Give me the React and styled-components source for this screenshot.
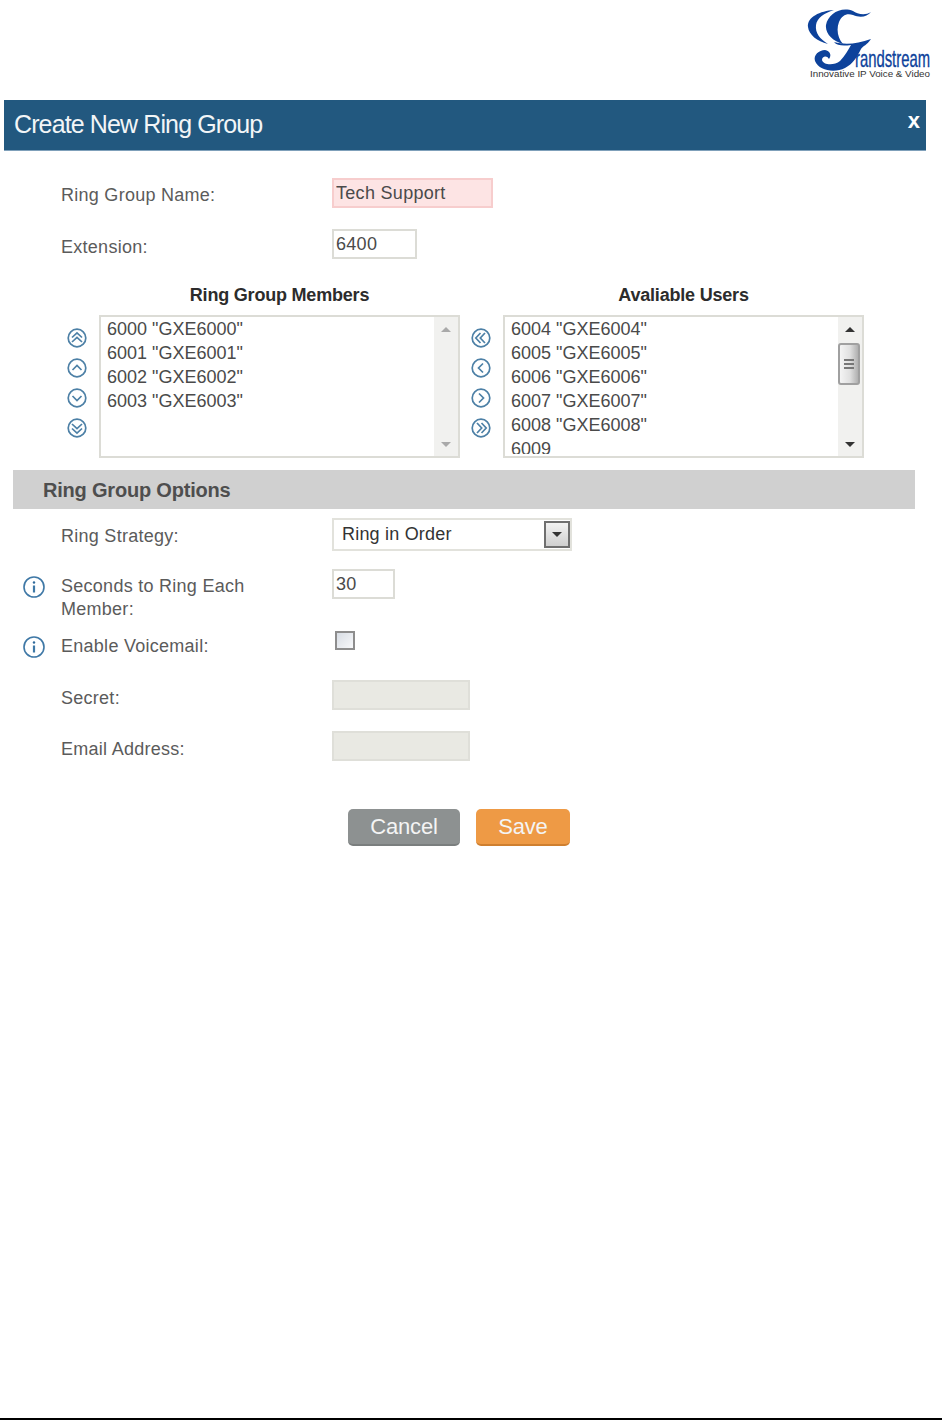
import React from "react"
import styled, { createGlobalStyle } from "styled-components"

const GlobalStyle = createGlobalStyle`
  html, body {
    margin: 0;
    padding: 0;
    background: #fff;
  }
  body {
    font-family: "Liberation Sans", Arial, sans-serif;
  }
`

const Page = styled.div`
  width: 942px;
  height: 1420px;
  box-sizing: border-box;
  border-bottom: 2px solid #000;
  overflow: hidden;
`

const TopBar = styled.header`
  height: 100px;
  display: flex;
  justify-content: flex-end;
  align-items: flex-start;
  padding: 8px 11px 0 0;
  box-sizing: border-box;
`

const Dialog = styled.main`
  width: 922px;
  margin-left: 4px;
`

const TitleBar = styled.div`
  height: 51px;
  background: #22587f;
  border-bottom: 1px solid #7fa0ba;
  box-sizing: border-box;
  display: flex;
  align-items: center;
  justify-content: space-between;
  padding: 0 6px 2px 10px;
  color: #f2f5f7;
`

const Title = styled.h1`
  margin: 0;
  font-size: 25px;
  font-weight: 400;
  letter-spacing: -0.88px;
`

const Close = styled.span`
  font-size: 22px;
  font-weight: 700;
  line-height: 1;
  margin-bottom: 6px;
  color: #fff;
`

const Form = styled.form`
  padding: 27px 0 0 18px;
  margin: 0;
`

const Row = styled.div`
  display: grid;
  grid-template-columns: 39px 271px 1fr;
  align-items: start;
  height: ${p => p.$height || 51}px;
`

const Hint = styled.span`
  display: flex;
  padding-top: ${p => p.$top || 6}px;
`

const Label = styled.label`
  font-size: 18px;
  line-height: 23px;
  letter-spacing: 0.27px;
  padding-top: ${p => p.$top ?? 6}px;
  color: #5b5b5b;
  width: 200px;
`

const TextInput = styled.input`
  display: block;
  width: ${p => p.$width}px;
  height: 30px;
  box-sizing: border-box;
  border: 2px solid ${p => (p.$error ? "#f7cdcd" : p.$disabled ? "#dfdfd9" : "#dcdcd6")};
  background: ${p => (p.$error ? "#fde4e4" : p.$disabled ? "#e9e9e3" : "#fff")};
  padding: 0 0 0 2px;
  margin: 0;
  font-family: "Liberation Sans", Arial, sans-serif;
  font-size: 18px;
  letter-spacing: 0.3px;
  color: #4a4a4a;
  outline: none;
`

const Transfer = styled.div`
  display: grid;
  grid-template-columns: 361px 361px;
  column-gap: 43px;
  margin: 26px 0 12px 77px;
`

const TransferColumn = styled.section`
  display: flex;
  flex-direction: column;
`

const ColumnTitle = styled.h3`
  margin: 0 0 9px;
  font-size: 18px;
  line-height: 21px;
  font-weight: 700;
  letter-spacing: -0.2px;
  text-align: center;
  color: #2c2c2c;
`

const ListRow = styled.div`
  position: relative;
`

const ArrowStack = styled.div`
  position: absolute;
  left: -42px;
  top: 0;
  bottom: 0;
  width: 40px;
  display: flex;
  flex-direction: column;
  align-items: center;
  padding-top: 13px;
  box-sizing: border-box;
  gap: 10px;
`

const ListBox = styled.div`
  height: 143px;
  box-sizing: border-box;
  border: 2px solid #dcdcd6;
  display: grid;
  grid-template-columns: 1fr 24px;
  background: #fff;
`

const Items = styled.ul`
  list-style: none;
  margin: 0;
  padding: 0 0 0 6px;
  height: 137px;
  overflow: hidden;
`

const Item = styled.li`
  font-size: 18px;
  line-height: 24px;
  color: #4a4a4a;
`

const Scrollbar = styled.div`
  background: #f1f1ef;
  display: flex;
  flex-direction: column;
  align-items: center;
  justify-content: space-between;
  padding: 10px 0 9px;
  position: relative;
`

const ScrollArrow = styled.span`
  width: 0;
  height: 0;
  border-left: 5px solid transparent;
  border-right: 5px solid transparent;
  border-${p => (p.$down ? "top" : "bottom")}: 5px solid ${p => (p.$dim ? "#a9a9a9" : "#333")};
`

const Thumb = styled.div`
  position: absolute;
  top: 26px;
  left: 0;
  width: 22px;
  height: 42px;
  box-sizing: border-box;
  border: 2px solid #a0a0a0;
  border-radius: 3px;
  background: linear-gradient(90deg, #f4f4f4, #e0e0e0 55%, #b0b0b0);
  display: flex;
  flex-direction: column;
  align-items: center;
  justify-content: center;
  gap: 2px;
`

const Grip = styled.i`
  width: 10px;
  height: 2px;
  background: #777;
`

const SectionBar = styled.div`
  width: 902px;
  height: 39px;
  margin-left: -9px;
  background: #d0d0d0;
  display: flex;
  align-items: center;
  padding: 1px 0 0 30px;
  box-sizing: border-box;
  font-size: 20px;
  font-weight: 700;
  letter-spacing: -0.2px;
  color: #4e4e4e;
  margin-bottom: 9px;
`

const Select = styled.div`
  width: 240px;
  height: 33px;
  box-sizing: border-box;
  border: 2px solid #e2e2dc;
  display: flex;
  align-items: center;
  justify-content: space-between;
  padding: 0 0 0 8px;
  font-size: 18px;
  letter-spacing: 0.2px;
  color: #333;
`

const SelectButton = styled.span`
  width: 26px;
  height: 27px;
  box-sizing: border-box;
  border: 2px solid #6f6f6f;
  background: linear-gradient(#f2f2f2, #cfcfcf);
  display: flex;
  align-items: center;
  justify-content: center;
`

const CheckBox = styled.span`
  display: block;
  width: 20px;
  height: 19px;
  margin: 0 0 0 3px;
  box-sizing: border-box;
  border: 2px solid #8d8d8d;
  background: linear-gradient(135deg, #d8dde4, #f7f8fa);
`

const Actions = styled.div`
  display: flex;
  gap: 16px;
  margin: -3px 0 0 326px;
`

const Button = styled.button`
  height: 37px;
  width: ${p => p.$width}px;
  padding: 0;
  border: none;
  border-radius: 5px;
  font-family: "Liberation Sans", Arial, sans-serif;
  font-size: 22px;
  letter-spacing: -0.2px;
  color: #f4f4f4;
  background: ${p => (p.$primary ? "#ee9a45" : "#8d9191")};
  border-bottom: 2px solid ${p => (p.$primary ? "#cf7f2f" : "#7a7e7e")};
`

const Logo = () => (
  <svg width="124" height="72" viewBox="0 0 124 72" aria-label="Grandstream">
    <g fill="#0d429b">
      <path d="M27 2C13 3 0 9 1 19C2 27 10 33 21 36C13 31 8 25 9 17C10 10 17 5 27 2Z" />
      <path d="M64 4C58 8 50 6 46 3C34 -2 21 6 19 17C18 26 26 33 36 36C31 30 29 22 32 14C35 7 40 5 46 7C53 10 60 9 64 4Z" />
      <path d="M27 34C38 37 50 36 64 31C60 37 56 38 54 41C50 49 46 56 38 60C28 65 12 63 8 53C6 47 12 42 18 42C23 43 25 47 22 51C20 47 15 48 15 52C16 57 27 58 33 53C38 48 41 42 44 37C37 38 30 38 27 34Z" />
      <text x="48" y="59" fontFamily="Liberation Sans, sans-serif" fontSize="24" stroke="#0d429b" strokeWidth="0.35" textLength="75" lengthAdjust="spacingAndGlyphs">randstream</text>
    </g>
    <text x="3" y="69" fill="#333" fontFamily="Liberation Sans, sans-serif" fontSize="9" textLength="120" lengthAdjust="spacingAndGlyphs">Innovative IP Voice &amp; Video</text>
  </svg>
)

const InfoIcon = () => (
  <svg width="24" height="24" viewBox="0 0 24 24" fill="none" stroke="#3f78a6">
    <circle cx="12" cy="12" r="10" strokeWidth="1.6" />
    <circle cx="12" cy="7.5" r="1.2" fill="#2f6a9b" stroke="none" />
    <path d="M12 10.5V17.5" strokeWidth="2.2" />
  </svg>
)

const ArrowSvg = styled.svg`
  transform: rotate(${p => p.$angle}deg);
  display: block;
`

// double chevrons point up before rotation
const MoveIcon = ({ angle, double }) => (
  <ArrowSvg $angle={angle} width="20" height="20" viewBox="0 0 20 20" fill="none" stroke="#4d80a6" strokeWidth="1.7">
    <circle cx="10" cy="10" r="8.8" />
    {double ? (
      <>
        <path d="M5 9.5L10 4.8L15 9.5" />
        <path d="M5 14L10 9.3L15 14" />
      </>
    ) : (
      <path d="M5.5 12L10 7.5L14.5 12" />
    )}
  </ArrowSvg>
)

const members = ['6000 "GXE6000"', '6001 "GXE6001"', '6002 "GXE6002"', '6003 "GXE6003"']
const users = ['6004 "GXE6004"', '6005 "GXE6005"', '6006 "GXE6006"', '6007 "GXE6007"', '6008 "GXE6008"', "6009"]

const orderIcons = [[0, true], [0, false], [180, false], [180, true]]
const moveIcons = [[270, true], [270, false], [90, false], [90, true]]

const UserList = ({ title, items, icons, thumb }) => (
  <TransferColumn>
    <ColumnTitle>{title}</ColumnTitle>
    <ListRow>
      <ArrowStack>
        {icons.map(([angle, double], i) => <MoveIcon key={i} angle={angle} double={double} />)}
      </ArrowStack>
      <ListBox>
        <Items>
          {items.map(item => <Item key={item}>{item}</Item>)}
        </Items>
        <Scrollbar>
          <ScrollArrow $dim={!thumb} />
          {thumb && <Thumb><Grip /><Grip /><Grip /></Thumb>}
          <ScrollArrow $down $dim={!thumb} />
        </Scrollbar>
      </ListBox>
    </ListRow>
  </TransferColumn>
)

const App = () => (
  <Page>
    <GlobalStyle />
    <TopBar><Logo /></TopBar>
    <Dialog>
      <TitleBar>
        <Title>Create New Ring Group</Title>
        <Close>x</Close>
      </TitleBar>
      <Form>
        <Row>
          <span />
          <Label>Ring Group Name:</Label>
          <TextInput $width={161} $error defaultValue="Tech Support" />
        </Row>
        <Row $height={30}>
          <span />
          <Label $top={7}>Extension:</Label>
          <TextInput $width={85} defaultValue="6400" />
        </Row>
        <Transfer>
          <UserList title="Ring Group Members" items={members} icons={orderIcons} />
          <UserList title="Avaliable Users" items={users} icons={moveIcons} thumb />
        </Transfer>
        <SectionBar>Ring Group Options</SectionBar>
        <Row>
          <span />
          <Label $top={7}>Ring Strategy:</Label>
          <Select>
            Ring in Order
            <SelectButton><ScrollArrow $down /></SelectButton>
          </Select>
        </Row>
        <Row $height={62}>
          <Hint $top={6}><InfoIcon /></Hint>
          <Label>Seconds to Ring Each Member:</Label>
          <TextInput $width={63} defaultValue="30" />
        </Row>
        <Row $height={49}>
          <Hint $top={4}><InfoIcon /></Hint>
          <Label $top={4}>Enable Voicemail:</Label>
          <CheckBox />
        </Row>
        <Row>
          <span />
          <Label $top={7}>Secret:</Label>
          <TextInput $width={138} $disabled disabled />
        </Row>
        <Row $height={81}>
          <span />
          <Label $top={7}>Email Address:</Label>
          <TextInput $width={138} $disabled disabled />
        </Row>
        <Actions>
          <Button type="button" $width={112}>Cancel</Button>
          <Button type="button" $width={94} $primary>Save</Button>
        </Actions>
      </Form>
    </Dialog>
  </Page>
)

export default App
